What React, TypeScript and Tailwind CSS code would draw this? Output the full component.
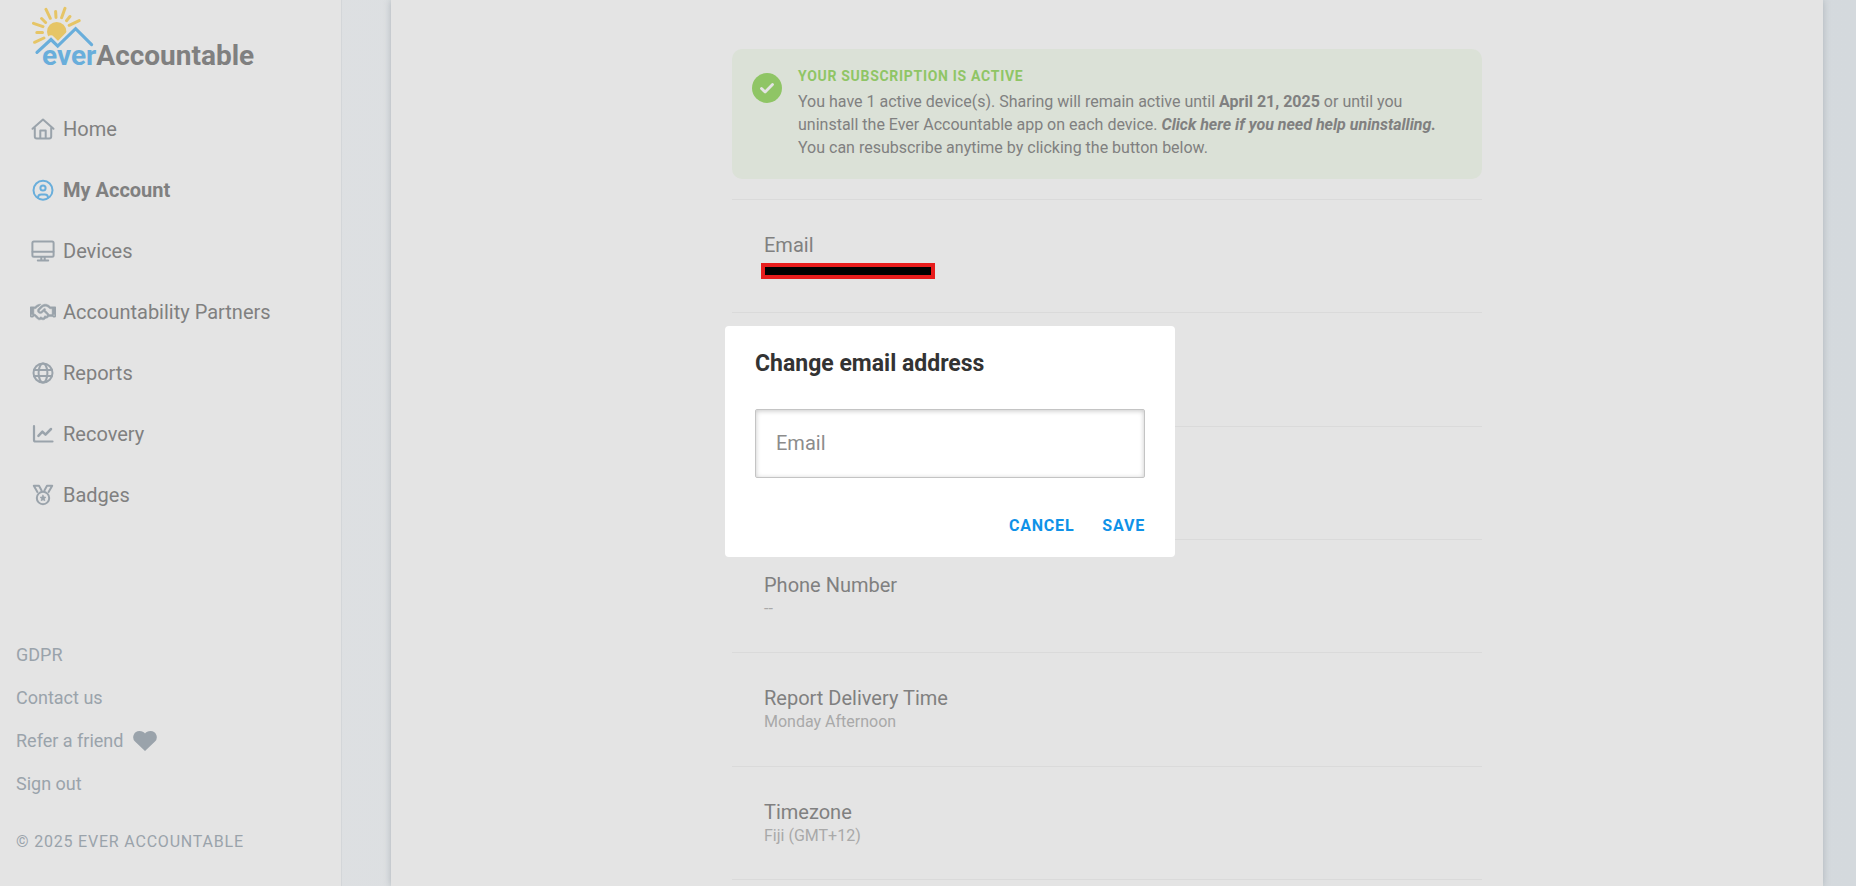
import type { ReactNode } from "react";
import { FaRegHandshake } from "react-icons/fa6";

function Glyph({ children }: { children: ReactNode }) {
  return (
    <svg viewBox="0 0 24 24" className="size-6" fill="none" stroke="currentColor" strokeWidth="2" strokeLinecap="round" strokeLinejoin="round" aria-hidden="true">
      {children}
    </svg>
  );
}

const nav: { label: string; icon: ReactNode; active?: boolean }[] = [
  {
    label: "Home",
    icon: (
      <Glyph>
        <path d="M1.5 11.8 12 2.6l10.500 9.200M3.800 10.500v9a2 2 0 0 0 2 2h12.400a2 2 0 0 0 2-2v-9M9.300 21v-7.600h5.400V21" />
      </Glyph>
    ),
  },
  {
    label: "My Account",
    active: true,
    icon: (
      <Glyph>
        <circle cx="12" cy="12.200" r="9.500" />
        <circle cx="12" cy="10" r="2.600" />
        <path d="M7 19.800c0-2 1.200-3.400 3.200-3.400h3.600c2 0 3.200 1.400 3.200 3.400" />
      </Glyph>
    ),
  },
  {
    label: "Devices",
    icon: (
      <Glyph>
        <rect x="1.400" y="2.400" width="21.200" height="15.400" rx="1.500" />
        <path d="M1.600 12.800h20.800M10.300 18v3M13.700 18v3M6.800 21.400h10.400" />
      </Glyph>
    ),
  },
  { label: "Accountability Partners", icon: <FaRegHandshake className="size-[26px]" strokeWidth="12" stroke="currentColor" aria-hidden="true" /> },
  {
    label: "Reports",
    icon: (
      <Glyph>
        <circle cx="12" cy="12" r="9.500" />
        <ellipse cx="12" cy="12" rx="4.400" ry="9.500" />
        <path d="M3.200 9h17.600M3.200 15h17.600" />
      </Glyph>
    ),
  },
  {
    label: "Recovery",
    icon: (
      <Glyph>
        <path strokeWidth="2.200" d="M3 4.200v13.800a1.500 1.500 0 0 0 1.500 1.500h17" />
        <path strokeWidth="2.500" d="m7.400 13.800 4-4.200 3.100 3L20 7" />
      </Glyph>
    ),
  },
  {
    label: "Badges",
    icon: (
      <Glyph>
        <circle cx="12" cy="15" r="6.200" />
        <path d="M10.600 7.400 8 2.800H2.800L6.400 9M13.400 7.400 16 2.800h5.200L17.600 9" />
        <path fill="currentColor" strokeWidth=".8" d="m12 12.200.9 1.800 2 .3-1.450 1.400.35 2-1.800-.95-1.800.95.35-2-1.450-1.400 2-.3z" />
      </Glyph>
    ),
  },
];

function Logo() {
  return (
    <a href="#" aria-label="everAccountable" className="relative block h-[66px] w-[226px]">
      <svg viewBox="32 0 62 56" className="h-14 w-[62px]" fill="none" strokeLinecap="round" aria-hidden="true">
        <path
          stroke="#e6c566"
          strokeWidth="3"
          d="M46 9.300l4.300 9M55.600 11.400l.4 6M65 8.300l-3.400 9.400M69.900 16.500l-3.400 4.200M79.200 20.600l-10 4.700M41.600 18.500l4 4M33.500 23.300l9.500 3.300M36.800 32.500h5.700M34.600 42.300l9.300-4.300"
        />
        <circle cx="56.700" cy="31.700" r="9.700" fill="#e6c566" />
        <path stroke="#e4e4e4" strokeWidth="8" strokeLinejoin="round" d="m45 45.100 6-5.600 7 7 11-11.300" />
        <path stroke="#69aedb" strokeWidth="3.200" strokeLinejoin="miter" d="M37 52.400 51 39.500l6.700 6.600L75.600 28.700l16 15.900" />
      </svg>
      <span className="absolute top-[38px] left-[10px] text-[28px] leading-9 font-bold whitespace-nowrap text-[#808080]">
        <span className="text-[#69aedb]">ever</span>Accountable
      </span>
    </a>
  );
}

const fields = [
  { label: "Email", redacted: true },
  { label: "", value: "" },
  { label: "", value: "" },
  { label: "Phone Number", value: "--" },
  { label: "Report Delivery Time", value: "Monday Afternoon" },
  { label: "Timezone", value: "Fiji (GMT+12)" },
];

export default function App() {
  return (
    <div className="flex h-screen overflow-hidden bg-linear-to-r from-[#dfe1e3] to-[#d4d9dd] font-[Roboto,sans-serif] text-[#808080]">
      <aside className="flex w-[342px] shrink-0 flex-col border-r border-[#d3d6d9] bg-[#e4e4e4]">
        <div className="pl-8">
          <Logo />
        </div>
        <nav className="mt-8 flex flex-col pl-[30px]">
          {nav.map((item) => (
            <a
              key={item.label}
              href="#"
              className={item.active ? "flex h-[61px] items-center gap-[7px] text-xl font-bold" : "flex h-[61px] items-center gap-[7px] text-xl"}
            >
              <span className={item.active ? "flex w-[26px] justify-center text-[#69aedb]" : "flex w-[26px] justify-center text-[#9aa3ab]"}>{item.icon}</span>
              {item.label}
            </a>
          ))}
        </nav>
        <footer className="mt-auto flex flex-col pb-7 pl-4 text-[#9aa3ab]">
          <a href="#" className="flex h-[43px] items-center text-lg">GDPR</a>
          <a href="#" className="flex h-[43px] items-center text-lg">Contact us</a>
          <a href="#" className="flex h-[43px] items-center gap-[10px] text-lg">
            Refer a friend
            <svg viewBox="0 0 24 20" className="h-5 w-6" fill="currentColor" aria-hidden="true">
              <path d="M12 20 2 10.500A6.200 6.200 0 0 1 6.500 0C9 0 11 1 12 2.500 13 1 15 0 17.500 0A6.200 6.200 0 0 1 22 10.500z" />
            </svg>
          </a>
          <a href="#" className="flex h-[43px] items-center text-lg">Sign out</a>
          <p className="mt-[21px] text-base leading-8 tracking-wider">© 2025 EVER ACCOUNTABLE</p>
        </footer>
      </aside>

      <main className="mr-[33px] ml-[49px] flex-1 bg-[#e4e4e4] px-8 pt-[49px] shadow-[0_0_7px_#adb4ba]">
        <div className="mx-auto max-w-[750px]">
          <section className="flex min-h-[130px] gap-4 rounded-[10px] bg-[#dbe1d7] px-5 pt-[17px]">
            <svg viewBox="0 0 30 30" className="mt-[7px] size-[30px] shrink-0" aria-hidden="true">
              <circle cx="15" cy="15" r="15" fill="#8fc565" />
              <path d="m9.500 15.500 3.600 3.600 7.400-7.600" fill="none" stroke="#e4e4e4" strokeWidth="2.800" strokeLinecap="round" strokeLinejoin="round" />
            </svg>
            <div>
              <h2 className="text-sm leading-5 font-bold tracking-wider text-[#8fc565]">YOUR SUBSCRIPTION IS ACTIVE</h2>
              <p className="mt-1 text-base leading-[23px]">
                You have 1 active device(s). Sharing will remain active until <strong>April 21, 2025</strong> or until you
                <br />
                uninstall the Ever Accountable app on each device.{" "}
                <a href="#" className="font-bold italic">Click here if you need help uninstalling.</a>
                <br />
                You can resubscribe anytime by clicking the button below.
              </p>
            </div>
          </section>
          <div className="mt-5 flex h-[681px] flex-col border-b border-[#dadada]">
            {fields.map((f, i) => (
              <div key={i} className="flex-1 border-t border-[#dadada] px-8 pt-[31px]">
                <h3 className="text-xl leading-7">{f.label}</h3>
                {f.redacted ? (
                  <div className="mt-1 -ml-[3px] h-4 w-[174px] border-4 border-[#e81c1c] bg-black" />
                ) : (
                  <p className="text-base leading-5 text-[#a9a9a9]">{f.value}</p>
                )}
              </div>
            ))}
          </div>
        </div>
      </main>

      <div className="fixed inset-0 flex items-center justify-center pb-[3px] pl-11">
        <form role="dialog" aria-labelledby="dialog-title" className="w-[450px] rounded bg-white px-[30px] pt-[22px] pb-[15px]" onSubmit={(e) => e.preventDefault()}>
          <h2 id="dialog-title" className="text-[23px] leading-8 font-bold text-[#333]">Change email address</h2>
          <input
            type="email"
            aria-label="Email"
            placeholder="Email"
            className="mt-[29px] block h-[69px] w-full rounded-[2px] border border-[#c4c4c4] px-5 pb-[2px] text-xl shadow-[inset_0_1px_5px_#c8c8c8] outline-none placeholder:text-[#8c8c8c]"
          />
          <div className="mt-8 flex justify-end gap-7">
            <button type="button" className="text-base leading-8 font-bold tracking-wider text-[#0f92e8]">CANCEL</button>
            <button type="submit" className="text-base leading-8 font-bold tracking-wider text-[#0f92e8]">SAVE</button>
          </div>
        </form>
      </div>
    </div>
  );
}
